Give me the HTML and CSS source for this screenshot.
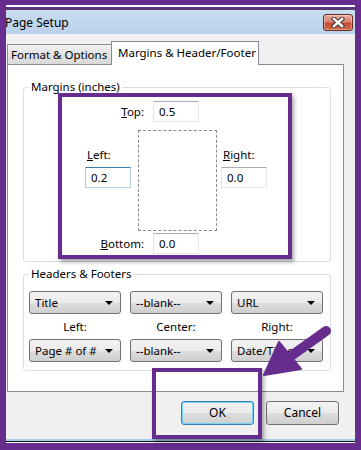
FILE: index.html
```html
<!DOCTYPE html>
<html lang="en">
<head>
  <meta charset="UTF-8">
  <title>Page Setup</title>
  <link rel="stylesheet" href="styles.css">
</head>
<body>
  <div class="window">
    <div class="topline"></div>

    <div class="titlebar">
      <span class="title">Page Setup</span>
      <button class="close">
        <svg width="14" height="11" viewBox="0 0 14 11">
          <path d="M3 2 L11 9 M11 2 L3 9" stroke="#3d3d3d" stroke-width="4.4" stroke-linecap="square"/>
          <path d="M3 2 L11 9 M11 2 L3 9" stroke="#fff" stroke-width="2.4" stroke-linecap="square"/>
        </svg>
      </button>
    </div>

    <div class="dialog">
      <div class="tabs">
        <div class="tab">Format &amp; Options</div>
        <div class="tab active">Margins &amp; Header/Footer</div>
      </div>

      <div class="panel">
        <fieldset class="group">
          <legend>Margins (inches)</legend>
          <div class="margins">
            <div class="edge-row top-row">
              <label class="edge-label"><u>T</u>op:</label>
              <div class="textbox">0.5</div>
            </div>

            <div class="middle-row">
              <div class="side">
                <label class="side-label"><u>L</u>eft:</label>
                <div class="textbox focused">0.2</div>
              </div>
              <div class="page"></div>
              <div class="side right-side">
                <label class="side-label"><u>R</u>ight:</label>
                <div class="textbox">0.0</div>
              </div>
            </div>

            <div class="edge-row bottom-row">
              <label class="edge-label"><u>B</u>ottom:</label>
              <div class="textbox">0.0</div>
            </div>
          </div>
        </fieldset>

        <fieldset class="group headers">
          <legend>Headers &amp; Footers</legend>
          <div class="combo-grid">
            <div class="combo">Title<span class="caret"></span></div>
            <div class="combo">--blank--<span class="caret"></span></div>
            <div class="combo">URL<span class="caret"></span></div>
            <div class="combo-label">Left:</div>
            <div class="combo-label">Center:</div>
            <div class="combo-label">Right:</div>
            <div class="combo">Page # of #<span class="caret"></span></div>
            <div class="combo">--blank--<span class="caret"></span></div>
            <div class="combo">Date/Time<span class="caret"></span></div>
          </div>
        </fieldset>
      </div>

      <div class="buttons">
        <button class="btn default">OK</button>
        <button class="btn">Cancel</button>
      </div>
    </div>

    <div class="bottomline"></div>
  </div>

  <!-- annotations drawn over the screenshot -->
  <div class="mark mark-margins"></div>
  <div class="mark mark-ok"></div>
  <svg class="arrow" width="361" height="450" viewBox="0 0 361 450">
    <line x1="326" y1="331" x2="291" y2="356" stroke="#662d8f" stroke-width="10" stroke-linecap="round"/>
    <polygon points="264,375 279,342 301,369" fill="#662d8f" stroke="#662d8f" stroke-width="2" stroke-linejoin="round"/>
  </svg>
</body>
</html>
```

FILE: styles.css
```css
* {
  box-sizing: border-box;
  margin: 0;
  padding: 0;
}

body {
  width: 361px;
  height: 450px;
  overflow: hidden;
  background: #662d8f;
  padding: 5px 0 0 6px;
  font-family: "Noto Sans", "Open Sans", sans-serif;
  font-size: 11.5px;
  line-height: 16px;
  color: #000;
  position: relative;
}

.window {
  width: 349px;
  overflow: hidden;
}

.topline {
  height: 2px;
  background: #fff;
  margin-bottom: 2px;
}

.titlebar {
  height: 25px;
  border-top: 1px solid #4a4a4a;
  background: linear-gradient(#c9dcf0, #b9d1ea);
  display: flex;
  align-items: center;
  justify-content: space-between;
  padding-right: 2px;
  font-size: 12px;
}

.title {
  margin-left: -1px;
  margin-top: 1px;
}

.close {
  width: 30px;
  height: 17px;
  margin-top: 1px;
  border: 1px solid #6b2a20;
  border-radius: 3px;
  background: linear-gradient(#e6ad9f 0%, #d88470 45%, #c84a32 55%, #cf6a4c 100%);
  box-shadow: inset 0 0 0 1px rgba(255, 255, 255, 0.35);
  display: flex;
  align-items: center;
  justify-content: center;
}

.dialog {
  background: #f0f0f0;
  padding: 7px 11px 14px 1px;
}

.tabs {
  display: flex;
  align-items: flex-end;
  height: 24px;
  margin-bottom: -1px;
  position: relative;
  z-index: 1;
}

.tab {
  width: 105px;
  height: 20px;
  margin-bottom: 1px;
  padding-left: 3px;
  border: 1px solid #898c95;
  border-bottom: none;
  background: linear-gradient(#f2f2f2, #e2e2e2 50%, #d9d9d9);
  line-height: 20px;
  white-space: nowrap;
  overflow: hidden;
}

.tab.active {
  width: 148px;
  height: 24px;
  margin-bottom: 0;
  margin-left: -1px;
  padding-left: 6px;
  background: #fff;
  line-height: 21px;
}

.panel {
  background: #fff;
  border: 1px solid #898c95;
  padding: 14px 12px 20px 15px;
}

.group {
  border: 1px solid #d5dfe5;
  border-radius: 3px;
  min-width: 0;
}

.group legend {
  margin-left: 5px;
  padding: 0 2px;
  line-height: 16px;
}

.margins {
  padding: 0 0 7px 61px;
}

.edge-row {
  display: flex;
  align-items: center;
  gap: 9px;
}

.top-row {
  margin-top: 6px;
}

.bottom-row {
  margin-top: 2px;
}

.edge-label {
  width: 59px;
  text-align: right;
}

.textbox {
  width: 46px;
  height: 21px;
  padding-left: 5px;
  line-height: 19px;
  background: #fff;
  border: 1px solid #e3e9ef;
  border-top-color: #abadb3;
  border-left-color: #e2e3ea;
}

.textbox.focused {
  border-color: #b5cfe7;
  border-top-color: #3d7bad;
  border-left-color: #a4c9e3;
}

.middle-row {
  display: flex;
  height: 101px;
  margin-top: 8px;
}

.side {
  width: 46px;
  padding-top: 17px;
  display: flex;
  flex-direction: column;
  gap: 4px;
}

.side-label {
  padding-left: 2px;
}

.right-side {
  width: 47px;
  margin-left: 4px;
}

.page {
  width: 79px;
  margin-left: 7px;
  border: 1px dashed #8a8a8a;
}

.headers {
  margin-top: 4px;
}

.combo-grid {
  display: grid;
  grid-template-columns: repeat(3, 92px);
  column-gap: 9px;
  row-gap: 4px;
  padding: 9px 6px 8px 5px;
}

.combo-label {
  text-align: center;
  margin-top: 1px;
}

.combo {
  height: 23px;
  padding-left: 5px;
  line-height: 21px;
  border: 1px solid #707070;
  border-radius: 3px;
  background: linear-gradient(#f2f2f2, #ebebeb 50%, #dddddd 51%, #cfcfcf);
  position: relative;
  white-space: nowrap;
  overflow: hidden;
}

.caret {
  position: absolute;
  right: 7px;
  top: 9px;
  border-left: 4px solid transparent;
  border-right: 4px solid transparent;
  border-top: 4px solid #000;
}

.buttons {
  display: flex;
  justify-content: flex-end;
  gap: 12px;
  padding-right: 5px;
  margin-top: 9px;
}

.btn {
  width: 73px;
  height: 24px;
  font: inherit;
  font-size: 12px;
  color: #000;
  border: 1px solid #707070;
  border-radius: 3px;
  background: linear-gradient(#f2f2f2, #ebebeb 50%, #dddddd 51%, #cfcfcf);
}

.btn.default {
  border-color: #3c7fb1;
  box-shadow: inset 0 0 0 1px #72d4f7;
}

.bottomline {
  height: 4px;
  background: linear-gradient(#a7cdec 0, #a7cdec 2px, #111 2px, #111 3px, #fff 3px);
}

.mark {
  position: absolute;
  border: 4px solid #662d8f;
  box-shadow: 2px 3px 4px rgba(0, 0, 0, 0.35);
}

.mark-margins {
  left: 58px;
  top: 93px;
  width: 234px;
  height: 166px;
}

.mark-ok {
  left: 152px;
  top: 368px;
  width: 110px;
  height: 71px;
}

.arrow {
  position: absolute;
  left: 0;
  top: 0;
  pointer-events: none;
}
```
